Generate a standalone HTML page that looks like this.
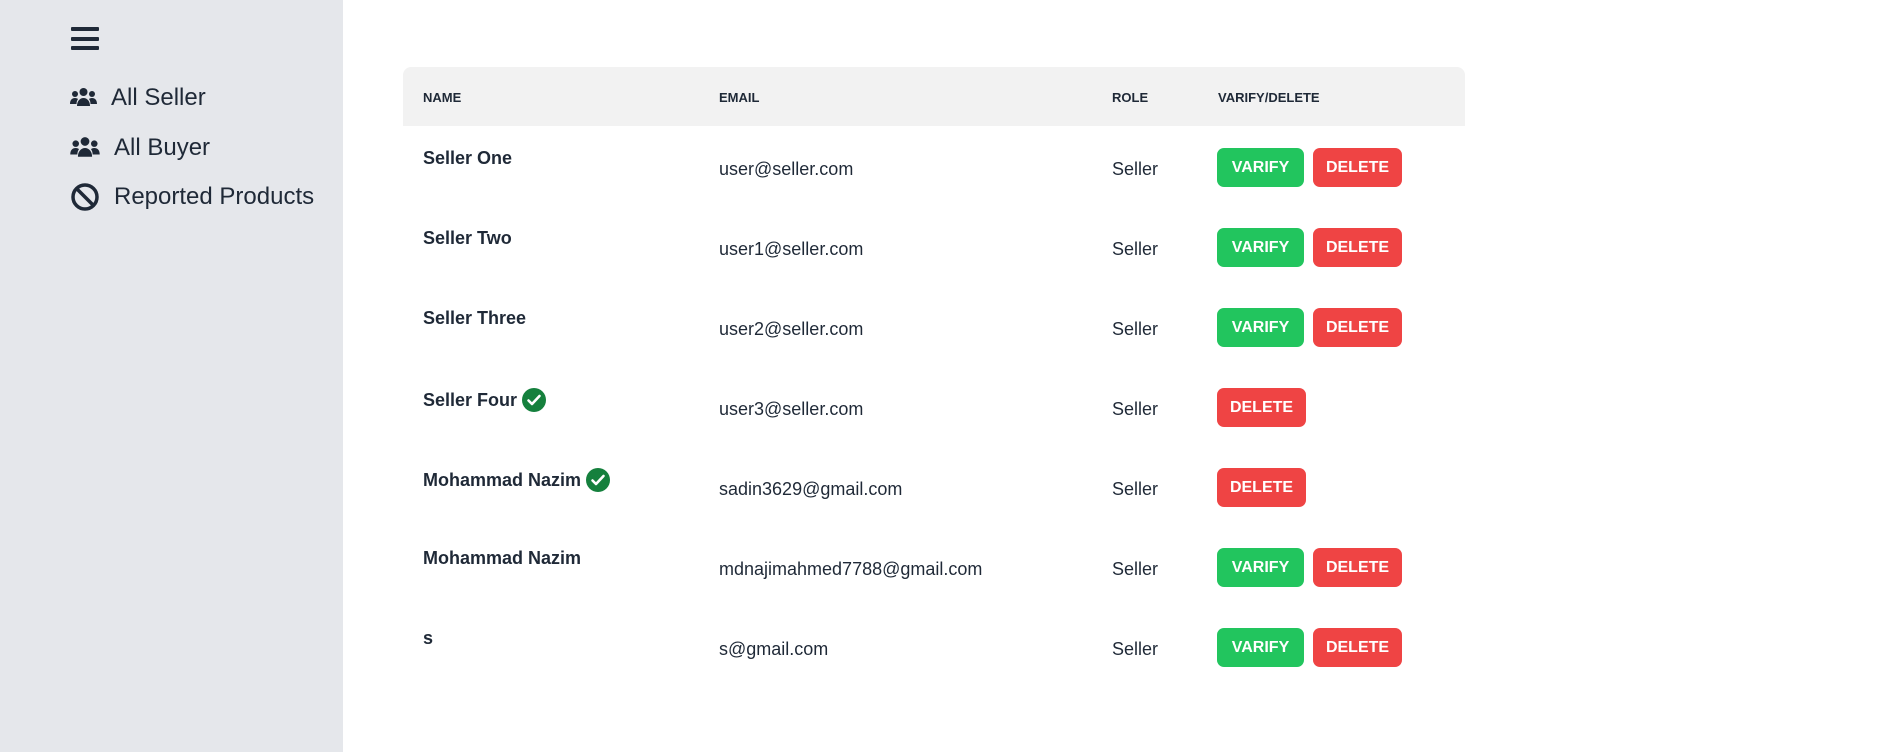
<!DOCTYPE html>
<html><head><meta charset="utf-8"><style>
*{margin:0;padding:0;box-sizing:border-box}
body{width:1900px;height:752px;overflow:hidden;background:#fff;font-family:"Liberation Sans",sans-serif;color:#1f2937;position:relative}
.side{position:absolute;left:0;top:0;width:343px;height:752px;background:#e5e7eb}
.ham{position:absolute;left:71px;top:27px;width:28px;height:23px}
.ham i{display:block;height:4px;background:#1f2937;border-radius:1px;margin-bottom:5.5px}
.nav{position:absolute;left:70px;font-size:24px;color:#1f2937;display:flex;align-items:center}
.nav svg{margin-right:14px}
.tbl{position:absolute;left:403px;top:67px;width:1062px}
.head{height:59px;background:#f2f2f2;border-radius:8px 8px 0 0;position:relative;font-size:13px;font-weight:bold}
.head span,.row span{position:absolute}
.head span{top:23px}
.row{height:80px;position:relative;font-size:18px}
.nm{left:20px;top:22px;font-weight:bold;display:flex;align-items:center}
.em{left:316px;top:33px}
.rl{left:709px;top:33px}
.b{position:absolute;top:22px;height:39px;border-radius:7px;color:#fff;font-weight:bold;font-size:16px;display:flex;align-items:center;justify-content:center;padding-top:1px}
.v{left:814px;width:87px;background:#22c55e}
.d{left:910px;width:89px;background:#ef4444}
.d1{left:814px;width:89px;background:#ef4444}
.ck{margin-left:5px}
</style></head><body>
<div class="side">
<div class="ham"><i></i><i></i><i></i></div>
<div class="nav" style="top:84px"><svg width="27" height="22" viewBox="0 0 27 22"><circle cx="13.5" cy="5" r="4" fill="#1f2937"/><circle cx="5" cy="7" r="3" fill="#1f2937"/><circle cx="22" cy="7" r="3" fill="#1f2937"/><path d="M7 19c0-5 3-8 6.5-8s6.5 3 6.5 8z" fill="#1f2937"/><path d="M0 17c0-4 2-6 5-6 1.5 0 2.5.5 3 1-1 1.5-1.5 3-1.5 5z" fill="#1f2937"/><path d="M27 17c0-4-2-6-5-6-1.5 0-2.5.5-3 1 1 1.5 1.5 3 1.5 5z" fill="#1f2937"/></svg>All Seller</div>
<div class="nav" style="top:134px"><svg width="30" height="24" viewBox="0 0 27 22"><circle cx="13.5" cy="5" r="4" fill="#1f2937"/><circle cx="5" cy="7" r="3" fill="#1f2937"/><circle cx="22" cy="7" r="3" fill="#1f2937"/><path d="M7 19c0-5 3-8 6.5-8s6.5 3 6.5 8z" fill="#1f2937"/><path d="M0 17c0-4 2-6 5-6 1.5 0 2.5.5 3 1-1 1.5-1.5 3-1.5 5z" fill="#1f2937"/><path d="M27 17c0-4-2-6-5-6-1.5 0-2.5.5-3 1 1 1.5 1.5 3 1.5 5z" fill="#1f2937"/></svg>All Buyer</div>
<div class="nav" style="top:182px"><svg width="30" height="30" viewBox="0 0 30 30"><circle cx="15" cy="15" r="12" fill="none" stroke="#1f2937" stroke-width="3.5"/><path d="M7 7L23 23" stroke="#1f2937" stroke-width="3.5"/></svg>Reported Products</div>
</div>
<div class="tbl">
<div class="head"><span style="left:20px">NAME</span><span style="left:316px">EMAIL</span><span style="left:709px">ROLE</span><span style="left:815px">VARIFY/DELETE</span></div>
<div class="row"><span class="nm">Seller One</span><span class="em">user@seller.com</span><span class="rl">Seller</span><div class="b v">VARIFY</div><div class="b d">DELETE</div></div>
<div class="row"><span class="nm">Seller Two</span><span class="em">user1@seller.com</span><span class="rl">Seller</span><div class="b v">VARIFY</div><div class="b d">DELETE</div></div>
<div class="row"><span class="nm">Seller Three</span><span class="em">user2@seller.com</span><span class="rl">Seller</span><div class="b v">VARIFY</div><div class="b d">DELETE</div></div>
<div class="row"><span class="nm">Seller Four<svg class="ck" width="24" height="24" viewBox="0 0 24 24"><circle cx="12" cy="12" r="12" fill="#15803d"/><path d="M6.5 12.5l3.5 3.5 7.5-8" fill="none" stroke="#fff" stroke-width="2.6" stroke-linecap="round" stroke-linejoin="round"/></svg></span><span class="em">user3@seller.com</span><span class="rl">Seller</span><div class="b d1">DELETE</div></div>
<div class="row"><span class="nm">Mohammad Nazim<svg class="ck" width="24" height="24" viewBox="0 0 24 24"><circle cx="12" cy="12" r="12" fill="#15803d"/><path d="M6.5 12.5l3.5 3.5 7.5-8" fill="none" stroke="#fff" stroke-width="2.6" stroke-linecap="round" stroke-linejoin="round"/></svg></span><span class="em">sadin3629@gmail.com</span><span class="rl">Seller</span><div class="b d1">DELETE</div></div>
<div class="row"><span class="nm">Mohammad Nazim</span><span class="em">mdnajimahmed7788@gmail.com</span><span class="rl">Seller</span><div class="b v">VARIFY</div><div class="b d">DELETE</div></div>
<div class="row"><span class="nm">s</span><span class="em">s@gmail.com</span><span class="rl">Seller</span><div class="b v">VARIFY</div><div class="b d">DELETE</div></div>
</div>
</body></html>
